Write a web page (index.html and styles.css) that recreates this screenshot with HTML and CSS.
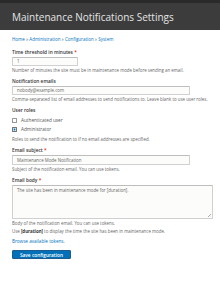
FILE: index.html
```html
<!DOCTYPE html>
<html>
<head>
<meta charset="utf-8">
<link rel="stylesheet" href="styles.css">
</head>
<body>
<header class="page-head">
  <h1 class="title">Maintenance Notifications Settings</h1>
</header>
<main class="content">
  <nav class="crumbs"><a href="#">Home</a> » <a href="#">Administration</a> » <a href="#">Configuration</a> » <a href="#">System</a></nav>
  <form class="form">
    <div class="item">
      <label class="label">Time threshold in minutes <span class="req">*</span></label>
      <div class="input short">1</div>
      <div class="desc">Number of minutes the site must be in maintenance mode before sending an email.</div>
    </div>
    <div class="item">
      <label class="label">Notification emails</label>
      <div class="input wide">nobody@example.com</div>
      <div class="desc">Comma-separated list of email addresses to send notifications to. Leave blank to use user roles.</div>
    </div>
    <div class="item">
      <div class="label">User roles</div>
      <div class="check"><span class="box"></span><span>Authenticated user</span></div>
      <div class="check"><span class="box on"></span><span>Administrator</span></div>
      <div class="desc">Roles to send the notification to if no email addresses are specified.</div>
    </div>
    <div class="item">
      <label class="label">Email subject <span class="req">*</span></label>
      <div class="input wide tall">Maintenance Mode Notification</div>
      <div class="desc">Subject of the notification email. You can use tokens.</div>
    </div>
    <div class="item last">
      <label class="label">Email body <span class="req">*</span></label>
      <div class="input area">The site has been in maintenance mode for [duration].<span class="grip"></span></div>
      <div class="desc">Body of the notification email. You can use tokens.</div>
      <div class="desc">Use <b>[duration]</b> to display the time the site has been in maintenance mode.</div>
    </div>
    <a class="browse" href="#">Browse available tokens.</a>
    <div class="actions"><span class="btn">Save configuration</span></div>
  </form>
</main>
</body>
</html>
```
FILE: styles.css
```css
html, body { margin: 0; padding: 0; background: #fff; }
body { font-family: "Open Sans", "Liberation Sans", sans-serif; color: #333; width: 220px; height: 285px; overflow: hidden; }
.page-head { height: 27px; background: #3c3c3c; border-top: 3px solid #2a2a2a; display: flex; align-items: center; padding-left: 12px; }
.title { margin: 0; font-weight: 400; font-size: 10px; color: #e4e4e4; line-height: 12px; letter-spacing: 0; }
.content { padding: 0 7px 0 12px; }
.crumbs { margin-top: 6px; font-size: 4.5px; line-height: 6px; color: #666; }
.crumbs a, .browse { color: #0074bd; text-decoration: none; }
.form { display: flex; flex-direction: column; margin-top: 7px; }
.item { display: flex; flex-direction: column; margin-bottom: 5px; }
.item.last { margin-bottom: 0; }
.label { font-size: 4.8px; font-weight: 600; line-height: 6px; color: #333; }
.req { color: #e62600; }
.input { box-sizing: border-box; height: 9px; margin-top: 2px; border: 1px solid #d0d0d0; border-top-color: #bdbdbd; border-radius: 1px; background: #fcfcfa; font-size: 4.4px; line-height: 7px; padding: 0 4px; color: #666; position: relative; }
.input.tall { height: 10px; line-height: 8px; }
.short { width: 66px; }
.wide { width: 178px; }
.area { width: 201px; height: 34px; line-height: 9px; padding: 0 4px; }
.grip { position: absolute; right: 1px; bottom: 1px; width: 3px; height: 3px; background: linear-gradient(135deg, transparent 45%, #aaa 50%, transparent 60%, transparent 70%, #aaa 75%, transparent 85%); }
.desc { font-size: 4.4px; line-height: 6px; color: #666; margin-top: 1px; }
.desc + .desc { margin-top: 2px; }
.desc b { color: #333; }
.check { display: flex; align-items: center; gap: 4px; font-size: 4.7px; line-height: 6px; color: #555; margin-top: 4px; }
.box { box-sizing: border-box; width: 5px; height: 5px; border: 1px solid #999; background: #fff; border-radius: 0.5px; }
.box.on { border-color: #777; background: #0074bd; box-shadow: inset 0 0 0 0.6px #fff; }
.check + .check { margin-top: 3px; }
.check + .desc { margin-top: 4px; }
.browse { font-size: 4.6px; line-height: 6px; margin-top: 4px; align-self: flex-start; }
.actions { margin-top: 6px; display: flex; }
.btn { display: inline-flex; align-items: center; justify-content: center; box-sizing: border-box; width: 59px; height: 9px; background: #0071b8; border: 0.5px solid #1e5c90; border-radius: 1px; color: #fff; font-size: 4.8px; font-weight: 600; }
```
